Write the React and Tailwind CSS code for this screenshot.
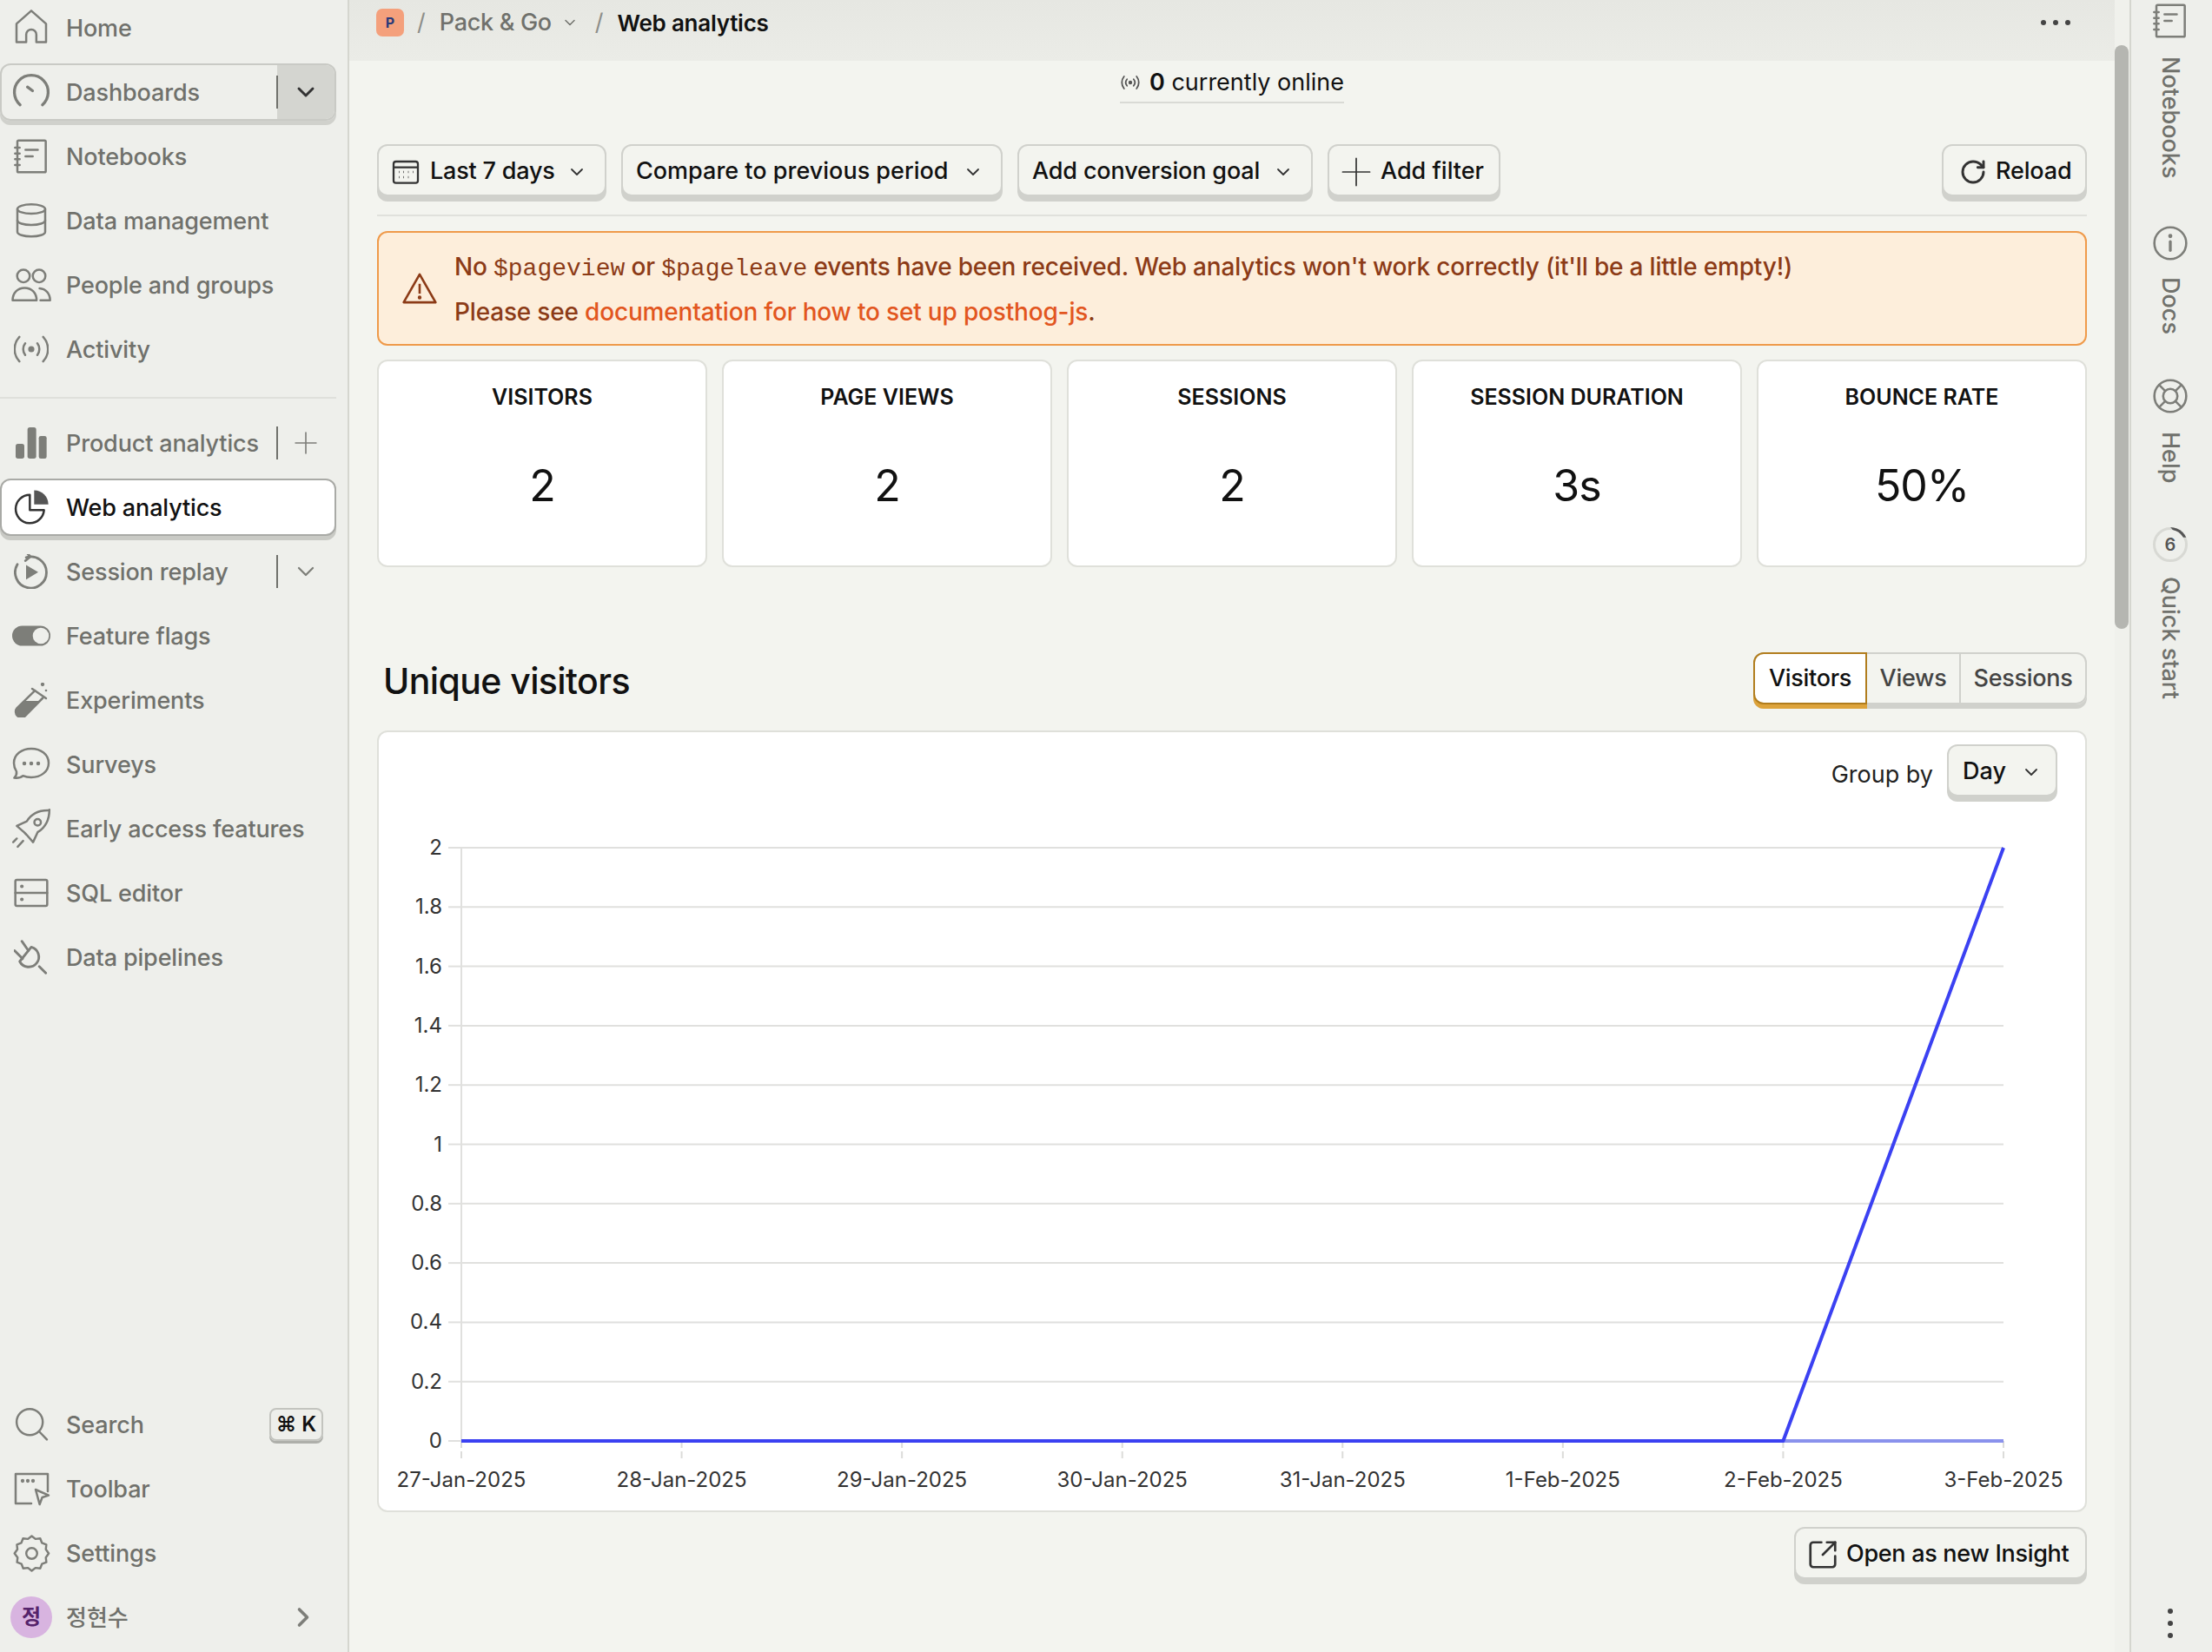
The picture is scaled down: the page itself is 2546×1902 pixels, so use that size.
import { ChevronDown, ChevronRight, RotateCw, SquareArrowOutUpRight } from "lucide-react";

const Ico = ({ children, className = "", w = 40, fill = "none", sw = 1.5 }) => (
  <svg width={w} height={w} viewBox="0 0 24 24" fill={fill} stroke="currentColor" strokeWidth={sw} strokeLinecap="round" strokeLinejoin="round" className={`shrink-0 ${className}`}>
    {children}
  </svg>
);

const HomeIcon = () => (
  <Ico className="-translate-y-[1px]"><path d="M1.800 22.500V9.800L12 .8l10.200 9v12.700h-6.700v-5.200a3.500 3.500 0 0 0-7 0v5.200z" /></Ico>
);
const GaugeIcon = () => (
  <Ico w={44} sw={1.800}><path d="M5 20A10.600 10.600 0 1 1 19 20" /><path d="M9.600 8.800l3.200 2.400" /></Ico>
);
const NotebookIcon = () => (
  <Ico><rect x="2.400" y="1" width="19.600" height="22" rx="0.800" /><path d="M.8 6h3.200M.8 10h3.200M.8 14h3.200M.8 18h3.200M8 7.500h8.500M8 12h5" /></Ico>
);
const DbIcon = () => (
  <Ico><ellipse cx="12" cy="4" rx="9.600" ry="3.200" /><path d="M2.400 4v15.800c0 1.800 4.300 3.200 9.600 3.200s9.600-1.400 9.600-3.200V4" /><path d="M2.400 11.800c0 1.800 4.300 3.200 9.600 3.200s9.600-1.400 9.600-3.200" /></Ico>
);
const PeopleIcon = () => (
  <Ico w={46} sw={1.300}><circle cx="7.300" cy="6.700" r="3.800" /><circle cx="16.700" cy="6.700" r="3.800" /><path d="M.8 21.300c0-4.600 3-7.500 7.200-7.500s7.200 2.900 7.200 7.500z" /><path d="M17 14.100c3.600.3 6.300 3 6.300 7.200h-5.800" /></Ico>
);
const ActivityIcon = () => (
  <Ico sw={1.500}>
    <circle cx="12" cy="12" r="1.400" fill="currentColor" />
    <path d="M7.800 8a6.500 6.500 0 0 0 0 8M16.200 8a6.500 6.500 0 0 1 0 8M3.800 3.500a12.500 12.500 0 0 0 0 17M20.200 3.500a12.500 12.500 0 0 1 0 17" />
  </Ico>
);
const BarsIcon = () => (
  <svg width="40" height="40" viewBox="0 0 24 24" fill="currentColor"><rect x="1.200" y="12.600" width="6" height="10.200" rx="1.600" /><rect x="9.400" y="1.200" width="6" height="21.600" rx="1.600" /><rect x="17.200" y="7.200" width="5.400" height="15.600" rx="1.400" /></svg>
);
const PieIcon = () => (
  <svg width="40" height="40" viewBox="0 0 24 24" fill="none" stroke="#333" strokeWidth="1.500" strokeLinejoin="round">
    <path d="M11 3.400a9.800 9.800 0 1 0 9.800 10.600H11z" />
    <path d="M14 .3a9.800 9.800 0 0 1 9.800 9.700H14z" fill="#555" stroke="none" />
  </svg>
);
const ReplayIcon = () => (
  <Ico sw={1.700}>
    <path d="M8.500 2.300a10.800 10.800 0 1 1-6.100 4.800" />
    <path d="M9 -1L11.300 1.800 8 4.500" />
    <path d="M8.400 7.500l8.400 5-8.400 5z" fill="currentColor" stroke="none" />
  </Ico>
);
const ToggleIcon = () => (
  <svg width="44" height="40" viewBox="0 0 44 40" className="shrink-0">
    <rect x="0" y="8.500" width="44" height="23" rx="11.500" fill="currentColor" />
    <circle cx="33" cy="20" r="9.300" fill="#eeefeb" />
  </svg>
);
const FlaskIcon = () => (
  <Ico w={40} sw={1.500}>
    <path d="M14.500 5.500L2.200 17.500a3.900 3.900 0 0 0 5.500 5.500L20 10.500" />
    <path d="M12.600 4.200l9.600 6.600" />
    <path d="M7.500 12.600h10L7.700 23a3.900 3.900 0 0 1-5.500-5.500z" fill="currentColor" stroke="none" />
    <circle cx="19.800" cy="1.200" r="1.300" fill="currentColor" stroke="none" />
    <circle cx="22.200" cy="5.400" r="0.800" fill="currentColor" stroke="none" />
  </Ico>
);
const ChatIcon = () => (
  <Ico w={48} sw={1.250}>
    <path d="M12 3c5.500 0 10 3.300 10 8.200s-4.500 8.300-10 8.300c-1.800 0-3.400-.3-4.800-.9-1.200 1-3 1.400-5 1.200 1-1 1.500-2.200 1.300-3.600C2.600 14.800 2 13 2 11.200 2 6.300 6.500 3 12 3z" />
    <circle cx="8" cy="11.500" r="0.500" fill="currentColor" /><circle cx="12" cy="11.500" r="0.500" fill="currentColor" /><circle cx="16" cy="11.500" r="0.500" fill="currentColor" />
  </Ico>
);
const RocketIcon = () => (
  <Ico w={50} sw={1.200}>
    <path d="M22 2c-6-.3-10 2-12.500 6L4 10.500l4 3.500 1 1 .5.500 3.500 4 2.500-5.500c4-2.500 6.500-6.500 6.500-12.500z" />
    <circle cx="15.500" cy="8.500" r="1.800" />
    <path d="M2 19.500l2-2M4.500 22l3-3.200" />
  </Ico>
);
const SqlIcon = () => (
  <Ico><rect x="1" y="3" width="22" height="18" rx="1" /><path d="M1 12h22" /><circle cx="5.500" cy="7.500" r="0.500" fill="currentColor" /><circle cx="5.500" cy="16.500" r="0.500" fill="currentColor" /></Ico>
);
const PlugIcon = () => (
  <Ico w={40} sw={1.700}>
    <path d="M4 15L12 5A7 7 0 1 1 4 15z" />
    <path d="M5.500 1L10 7.500M.5 7.500L6 13M17.500 18.500L22 23" />
  </Ico>
);
const SearchIcon = () => (
  <Ico w={44} sw={1.350}><circle cx="11" cy="10.500" r="8.200" /><path d="M17 16.500l4.800 5" /></Ico>
);
const ToolbarIcon = () => (
  <Ico w={48} sw={1.250}>
    <path d="M12 20.500H3V3.500h18.500v10" />
    <circle cx="7" cy="7.500" r="0.450" fill="currentColor" /><circle cx="10" cy="7.500" r="0.450" fill="currentColor" /><circle cx="13" cy="7.500" r="0.450" fill="currentColor" />
    <path d="M14.500 12.500l7.500 3.300-3.700 1.200-1.500 4z" />
  </Ico>
);
const GearIcon = () => (
  <Ico w={47} sw={1.250}>
    <circle cx="12" cy="12" r="3.200" />
    <path d="M9.800 3.500l2.200-1.700 2.200 1.700 2.800-.3 1 2.600 2.600 1-.3 2.800 1.700 2.400-1.700 2.400.3 2.800-2.600 1-1 2.600-2.800-.3-2.200 1.700-2.200-1.700-2.800.3-1-2.600-2.600-1 .3-2.800L1.900 12l1.700-2.400-.3-2.800 2.600-1 1-2.600z" />
  </Ico>
);
const LifebuoyIcon = () => (
  <Ico w={44} sw={1.400}>
    <circle cx="12" cy="12" r="10" /><circle cx="12" cy="12" r="4.500" />
    <path d="M5 5l3.800 3.800M19 5l-3.800 3.800M5 19l3.800-3.800M19 19l-3.800-3.800" />
  </Ico>
);
const InfoIcon = () => (
  <Ico w={44} sw={1.400}><circle cx="12" cy="12" r="10" /><path d="M12 11v5.500" strokeWidth="1.800" /><circle cx="12" cy="7.500" r="0.600" fill="currentColor" /></Ico>
);
const PlusMark = ({ w = 34, sw = 1.200 }) => (
  <Ico w={w} sw={sw}><path d="M12 1v22M1 12h22" /></Ico>
);
const CalendarIcon = () => (
  <svg width="32" height="32" viewBox="0 0 24 24" fill="none" stroke="#333" strokeWidth="1.700" strokeLinejoin="round">
    <rect x="1.500" y="3" width="21" height="18.500" rx="2" />
    <path d="M1.500 8h21" />
    <path d="M6 12h.5M10 12h.5M14 12h.5M18 12h.5M6 16.500h.5M10 16.500h.5M14 16.500h.5" strokeWidth="1.800" />
  </svg>
);
const WarningIcon = () => (
  <svg width="42" height="42" viewBox="0 0 24 24" fill="none" stroke="#8c3b17" strokeWidth="1.500" strokeLinejoin="round">
    <path d="M12 2.800L22.500 21.200H1.500z" />
    <path d="M12 9v6.500" />
    <circle cx="12" cy="18" r="0.500" fill="#8c3b17" />
  </svg>
);

const sideTop = [
  { label: "Home", icon: HomeIcon },
  { label: "Dashboards", icon: GaugeIcon, split: "chevron", raised: true },
  { label: "Notebooks", icon: NotebookIcon },
  { label: "Data management", icon: DbIcon },
  { label: "People and groups", icon: PeopleIcon },
  { label: "Activity", icon: ActivityIcon },
];
const sideMid = [
  { label: "Product analytics", icon: BarsIcon, split: "plus" },
  { label: "Web analytics", icon: PieIcon, active: true },
  { label: "Session replay", icon: ReplayIcon, split: "chevron-light" },
  { label: "Feature flags", icon: ToggleIcon },
  { label: "Experiments", icon: FlaskIcon },
  { label: "Surveys", icon: ChatIcon },
  { label: "Early access features", icon: RocketIcon },
  { label: "SQL editor", icon: SqlIcon },
  { label: "Data pipelines", icon: PlugIcon },
];

function SideRow({ label, icon: Icon, split, raised, active, extra }) {
  let box = "border-2 border-transparent";
  if (raised) box = "border-2 border-[#c9cac5] shadow-[0_5px_0_0_#d0d1cc]";
  if (active) box = "border-2 border-[#a9aaa6] bg-white shadow-[0_5px_0_0_#c9cac5]";
  return (
    <div className={`relative flex h-[66px] w-[387px] shrink-0 items-center rounded-[12px] pl-[14px] ${box}`}>
      <span className={`flex w-[40px] shrink-0 justify-center ${active ? "text-[#333]" : "text-[#7d7e79]"}`}>
        <Icon />
      </span>
      <span className={`ml-[20px] pt-[2px] text-[27px] font-medium tracking-[-0.15px] ${active ? "text-[#111]" : "text-[#70716c]"}`}>{label}</span>
      {split && (
        <div className={`ml-auto flex h-full w-[66px] items-center justify-center self-stretch rounded-r-[10px] ${split === "chevron" ? "bg-[#d4d5d0]" : ""}`}>
          {split === "plus" ? (
            <span className="text-[#7d7e79]"><PlusMark w={26} sw={1.500} /></span>
          ) : (
            <ChevronDown size={32} strokeWidth={split === "chevron" ? 2.200 : 1.700} className={split === "chevron" ? "text-[#333]" : "text-[#7d7e79]"} />
          )}
        </div>
      )}
      {split && <span className="absolute right-[65px] h-[38px] w-[2px] bg-[#70716c]" />}
      {extra}
    </div>
  );
}

function Btn({ children, className = "" }) {
  return (
    <button className={`flex h-[60px] shrink-0 items-center rounded-[12px] border-2 border-[#d0d1cc] bg-[#f3f4ef] pt-[3px] text-[27px] font-medium text-[#111] shadow-[0_6px_0_0_#d0d1cc] ${className}`}>
      {children}
    </button>
  );
}

const stats = [
  ["VISITORS", "2"],
  ["PAGE VIEWS", "2"],
  ["SESSIONS", "2"],
  ["SESSION DURATION", "3s"],
  ["BOUNCE RATE", "50%"],
];

function Chart() {
  const yTop = 54;
  const yStep = 68.3;
  const yLabels = ["2", "1.8", "1.6", "1.4", "1.2", "1", "0.8", "0.6", "0.4", "0.2", "0"];
  const xLabels = ["27-Jan-2025", "28-Jan-2025", "29-Jan-2025", "30-Jan-2025", "31-Jan-2025", "1-Feb-2025", "2-Feb-2025", "3-Feb-2025"];
  const xLeft = 95;
  const xStep = 253.57;
  const base = yTop + yStep * 10;
  return (
    <svg width="1963" height="817" className="block" style={{ fontFamily: "Inter, sans-serif" }}>
      {yLabels.map((l, i) => (
        <g key={l}>
          <line x1={xLeft} x2={1870} y1={yTop + i * yStep} y2={yTop + i * yStep} stroke="#e0e0de" strokeWidth="2" />
          <line x1={xLeft - 15} x2={xLeft} y1={yTop + i * yStep} y2={yTop + i * yStep} stroke="#e0e0de" strokeWidth="2" />
          <text x="73" y={yTop + i * yStep + 8} textAnchor="end" fontSize="24" fill="#333">{l}</text>
        </g>
      ))}
      <line x1={xLeft} x2={xLeft} y1={yTop} y2={base} stroke="#e0e0de" strokeWidth="2" />
      {xLabels.map((l, i) => (
        <g key={l}>
          <line x1={xLeft + i * xStep} x2={xLeft + i * xStep} y1={base} y2={base + 20} stroke="#dcdcda" strokeWidth="2" strokeDasharray="8 4" />
          <text x={xLeft + i * xStep} y={base + 53} textAnchor="middle" fontSize="24" fill="#333">{l}</text>
        </g>
      ))}
      <line x1={xLeft + 6 * xStep} x2={1870} y1={base} y2={base} stroke="#8a92ec" strokeWidth="4" />
      <polyline points={`${xLeft},${base} ${xLeft + 6 * xStep},${base} 1870,${yTop}`} fill="none" stroke="#3b41f2" strokeWidth="4" strokeLinejoin="round" />
    </svg>
  );
}

export default function App() {
  return (
    <div className="flex h-[1902px] w-[2546px] overflow-hidden bg-[#f3f4ef] [font-family:Inter,'Noto_Sans_CJK_KR',sans-serif]">
      {/* left nav */}
      <aside className="flex h-full w-[402px] shrink-0 flex-col border-r-2 border-[#d5d6cf] bg-[#eeefeb] pb-[7px] pr-[13px]">
        <nav className="-mt-[1px] flex flex-col gap-[8px]">
          {sideTop.map((r) => <SideRow key={r.label} {...r} />)}
        </nav>
        <div className="mb-[18px] mt-[22px] h-[2px] bg-[#dfe0db]" />
        <nav className="flex flex-col gap-[8px]">
          {sideMid.map((r) => <SideRow key={r.label} {...r} />)}
        </nav>
        <div className="mt-auto flex flex-col gap-[8px]">
          <SideRow
            label="Search"
            icon={SearchIcon}
            extra={
              <span className="ml-auto mr-[13px] flex h-[38px] w-[62px] items-center justify-center rounded-[8px] border-2 border-[#c3c4bf] text-[24px] font-semibold text-[#111] shadow-[0_3px_0_0_#aeafaa]">
                ⌘ K
              </span>
            }
          />
          <SideRow label="Toolbar" icon={ToolbarIcon} />
          <SideRow label="Settings" icon={GearIcon} />
          <div className="flex h-[66px] w-[387px] items-center pl-[12px] pr-[20px]">
            <span className="flex h-[48px] w-[48px] items-center justify-center rounded-full bg-[#d8b4e0] text-[24px] font-semibold text-[#55236b]">정</span>
            <span className="ml-[16px] text-[26px] font-medium text-[#70716c]">정현수</span>
            <ChevronRight size={36} strokeWidth={2.400} className="ml-auto text-[#7d7e79]" />
          </div>
        </div>
      </aside>

      {/* main column */}
      <main className="flex w-[2032px] shrink-0 flex-col">
        <header className="flex h-[70px] shrink-0 items-center bg-linear-to-b from-[#e6e7e2] to-[#ebece7] pb-[18px] pl-[31px] pr-[51px]">
          <span className="flex h-[32px] w-[32px] items-center justify-center rounded-[7px] bg-[#f4a07c] text-[16px] font-bold text-[#2a3a7a]">P</span>
          <span className="ml-[15px] text-[27px] text-[#8d8e89]">/</span>
          <span className="ml-[16px] text-[27px] font-medium tracking-[-0.3px] text-[#70716c]">Pack &amp; Go</span>
          <ChevronDown size={20} strokeWidth={1.800} className="ml-[11px] text-[#70716c]" />
          <span className="ml-[19px] text-[27px] text-[#8d8e89]">/</span>
          <span className="ml-[16px] text-[26px] font-semibold tracking-[-0.25px] text-[#111]">Web analytics</span>
          <div className="ml-auto flex gap-[8px]">
            <i className="h-[6px] w-[6px] rounded-full bg-[#444]" />
            <i className="h-[6px] w-[6px] rounded-full bg-[#444]" />
            <i className="h-[6px] w-[6px] rounded-full bg-[#444]" />
          </div>
        </header>

        <div className="flex flex-col px-[32px]">
          <div className="flex h-[49px] justify-center">
            <div className="flex items-center gap-[10px] border-b-2 border-[#d9dad5] pt-[3px] text-[27px] text-[#111]">
              <span className="text-[#555]"><Ico w={24} sw={1.800}><circle cx="12" cy="12" r="1.300" fill="currentColor" /><path d="M8.200 8.200a6 6 0 0 0 0 7.600M15.800 8.200a6 6 0 0 1 0 7.600M4.800 5a11 11 0 0 0 0 14M19.200 5a11 11 0 0 1 0 14" /></Ico></span>
              <span><b className="font-semibold">0</b> currently online</span>
            </div>
          </div>

          {/* filters */}
          <div className="mt-[47px] flex items-start gap-[17px] border-b-2 border-[#e0e1dc] pb-[21px]">
            <Btn className="w-[264px] pl-[15px] pr-[20px]">
              <CalendarIcon />
              <span className="ml-[12px] tracking-[-0.2px]">Last 7 days</span>
              <ChevronDown size={24} strokeWidth={1.800} className="ml-auto text-[#333]" />
            </Btn>
            <Btn className="w-[439px] pl-[15px] pr-[20px]">
              <span>Compare to previous period</span>
              <ChevronDown size={24} strokeWidth={1.800} className="ml-auto text-[#333]" />
            </Btn>
            <Btn className="w-[340px] pl-[15px] pr-[20px]">
              <span className="tracking-[-0.15px]">Add conversion goal</span>
              <ChevronDown size={24} strokeWidth={1.800} className="ml-auto text-[#333]" />
            </Btn>
            <Btn className="w-[199px] pl-[14px]">
              <span className="text-[#333]"><PlusMark /></span>
              <span className="ml-[11px]">Add filter</span>
            </Btn>
            <Btn className="ml-auto w-[167px] pl-[18px]">
              <RotateCw size={32} strokeWidth={2.200} className="text-[#333]" />
              <span className="ml-[10px] tracking-[-0.15px]">Reload</span>
            </Btn>
          </div>

          {/* warning */}
          <div className="mt-[17px] flex h-[132px] items-center rounded-[12px] border-2 border-[#ef9a4a] bg-[#fdeedb] pl-[26px] text-[28px] font-medium tracking-[-0.18px] text-[#8c3b17]">
            <WarningIcon />
            <div className="ml-[19px] flex flex-col gap-[12px] pt-[1px] leading-[40px]">
              <p className="h-[40px]">
                No <code className="text-[28px] font-normal tracking-normal [font-family:'Liberation_Mono',monospace]">$pageview</code> or{" "}
                <code className="text-[28px] font-normal tracking-normal [font-family:'Liberation_Mono',monospace]">$pageleave</code> events have been received. Web analytics won't work correctly (it'll be a little empty!)
              </p>
              <p className="h-[40px]">
                Please see <a className="text-[#e2561f]">documentation for how to set up posthog-js</a>.
              </p>
            </div>
          </div>

          {/* stat cards */}
          <div className="mt-[16px] grid grid-cols-5 gap-[17px]">
            {stats.map(([t, v]) => (
              <div key={t} className="flex h-[239px] flex-col items-center rounded-[12px] border-2 border-[#dfe0da] bg-white pt-[26px]">
                <div className="text-[25px] font-semibold leading-[30px] text-[#111]">{t}</div>
                <div className="mt-[57px] text-[50px] leading-[60px] tracking-[-1px] text-[#111]">{v}</div>
              </div>
            ))}
          </div>

          {/* chart header */}
          <div className="mt-[97px] flex h-[60px] items-start justify-between">
            <h2 className="pl-[7px] pt-[7px] text-[41px] font-medium leading-[54px] tracking-[-0.6px] text-[#111]">Unique visitors</h2>
            <div className="mt-[1px] flex h-[60px] rounded-[12px] border-2 border-[#d0d1cc] text-[27px] font-medium tracking-[-0.3px] text-[#444] shadow-[0_5px_0_0_#d0d1cc]">
              <div className="-my-[2px] -ml-[2px] flex w-[131px] items-center justify-center rounded-l-[12px] border-2 border-[#b17d1d] bg-white text-[#111] shadow-[0_5px_0_0_#dda33b]">Visitors</div>
              <div className="flex w-[108px] items-center justify-center border-r-2 border-[#d0d1cc]">Views</div>
              <div className="flex w-[143px] items-center justify-center">Sessions</div>
            </div>
          </div>

          {/* chart card */}
          <div className="mt-[31px] h-[900px] overflow-hidden rounded-[12px] border-2 border-[#dfe0da] bg-white">
            <div className="flex h-[79px] items-start justify-end pr-[32px] pt-[14px]">
              <span className="mt-[15px] text-[27px] text-[#222]">Group by</span>
              <Btn className="ml-[16px] w-[127px] px-[16px]">
                <span>Day</span>
                <ChevronDown size={24} strokeWidth={1.800} className="ml-auto text-[#333]" />
              </Btn>
            </div>
            <Chart />
          </div>

          <div className="mt-[17px] flex justify-end">
            <Btn className="w-[337px] pl-[12px]">
              <SquareArrowOutUpRight size={38} strokeWidth={1.700} className="text-[#333]" />
              <span className="ml-[8px] tracking-[-0.3px]">Open as new Insight</span>
            </Btn>
          </div>
        </div>
      </main>

      {/* scrollbar */}
      <div className="w-[17px] shrink-0 bg-[#f0f1ec] pt-[52px]">
        <div className="h-[672px] w-[16px] rounded-[8px] bg-[#b5b6b1]" />
      </div>

      {/* right rail */}
      <aside className="flex h-full flex-1 flex-col items-center border-l-2 border-[#d5d6cf] bg-[#eeefeb] pr-[3px] pt-[4px] text-[#70716c]">
        <span className="text-[#7d7e79]"><NotebookIcon /></span>
        <span className="mt-[21px] text-[27px] font-medium leading-[32px] [writing-mode:vertical-rl]">Notebooks</span>
        <span className="mt-[53px] text-[#7d7e79]"><InfoIcon /></span>
        <span className="mt-[17px] text-[27px] font-medium leading-[32px] [writing-mode:vertical-rl]">Docs</span>
        <span className="mt-[49px] text-[#7d7e79]"><LifebuoyIcon /></span>
        <span className="mt-[19px] text-[27px] font-medium leading-[32px] [writing-mode:vertical-rl]">Help</span>
        <div className="relative mt-[50px] flex h-[40px] w-[40px] items-center justify-center rounded-full border-[3px] border-[#d8d9d4] text-[20px] font-semibold text-[#555]">
          6
          <span className="absolute -right-[3px] -top-[3px] h-[20px] w-[20px] rounded-tr-full border-r-[3px] border-t-[3px] border-[#555] [clip-path:polygon(0_0,100%_0,100%_60%,50%_60%)]" />
        </div>
        <span className="mt-[17px] text-[27px] font-medium leading-[32px] [writing-mode:vertical-rl]">Quick start</span>
        <div className="mb-[16px] mt-auto flex flex-col gap-[8px]">
          <i className="h-[6px] w-[6px] rounded-full bg-[#444]" />
          <i className="h-[6px] w-[6px] rounded-full bg-[#444]" />
          <i className="h-[6px] w-[6px] rounded-full bg-[#444]" />
        </div>
      </aside>
    </div>
  );
}
